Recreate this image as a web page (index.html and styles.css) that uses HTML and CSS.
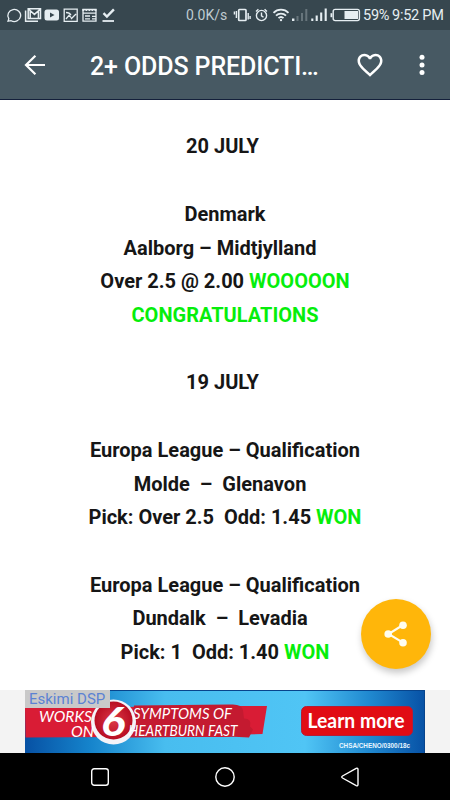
FILE: index.html
```html
<!doctype html>
<html lang="en">
<head>
  <meta charset="utf-8" />
  <meta name="viewport" content="width=device-width,initial-scale=1" />
  <title>2+ Odds Predictions</title>
  <link rel="stylesheet" href="styles.css">
</head>

<body>
  <!-- Status bar -->
  <div class="statusBar">
    <svg class="notices" width="118" height="30" viewBox="0 0 118 30" fill="none" stroke="currentColor" stroke-width="1.3">
      <path d="M8 21.2l.8-2.6a6.4 6 0 1 1 2.3 2.1z" />
      <path d="M28.2 8.7h12.3v9.8H28.2zM28.4 9l6 5.4L40.4 9M30.2 18V11M38.4 18V11M25.6 10.5v10.7H38" stroke-width="1.5" />
      <rect x="44.5" y="9.5" width="14.5" height="11" rx="2.5" fill="currentColor" stroke="none" />
      <path class="cutout" d="M50 12.4v5.2l4.5-2.6z" />
      <path d="M64.2 9.2h13v12.2h-13zM66 19l3-3.6 2.2 2.2M71 19l5-5M66 12.5c2 0 4 .8 5 2.8" />
      <path d="M83 9.4h13v11.8H83zM83 13.2h13M85 16h5M85 18.8h5M92 16.4h4M92 18.8h4" />
      <path d="M82.4 10h14.2" stroke-width="2" stroke-dasharray="2 1" />
      <path d="M103.5 13.2l3.4 3.3 7-7.2" stroke-width="2.4" />
      <path d="M102.5 21h11.5" stroke-width="1.8" />
    </svg>
    <span class="netSpeed">0.0K/s</span>
    <svg class="signals" width="130" height="30" viewBox="232 0 130 30" fill="none" stroke="currentColor" stroke-width="1.4">
      <rect x="238.7" y="9.5" width="7.3" height="11" rx=".8" stroke-width="1.7" />
      <path d="M236.4 11v7M234.4 11.5v3M248.2 13v6.5M250.1 16v3" />
      <circle cx="261.5" cy="15.5" r="5.1" />
      <path d="M261.5 12.4v3.4l2 1.5M256 11.4l2.4-2.2M267 11.4l-2.4-2.2" />
      <path d="M273.5 12.8a10.4 10.4 0 0 1 15 0M276 15.7a7 7 0 0 1 10 0M278.5 18.2a3.6 3.6 0 0 1 5 0" stroke-width="1.8" />
      <circle cx="281" cy="20.1" r="1.2" fill="currentColor" stroke="none" />
      <path d="M293.2 18.5v2.5" stroke-width="2.4" />
      <path class="faint" d="M297.5 16v5M302 13v8M306.3 9v12" stroke-width="2" />
      <path d="M312.3 18.5v2.5M316.7 15.5v5.5M321.2 12.5v8.5M325.7 8.5v12.5" stroke-width="2.1" />
      <rect x="333.2" y="9.4" width="26.2" height="11.2" rx="2" />
      <path d="M331.4 13.2v4" stroke-width="1.8" />
      <path d="M344.5 11h13.5v8h-13.5z" fill="currentColor" stroke="none" />
    </svg>
    <span class="battery">59%</span>
    <span class="clock">9:52 PM</span>
  </div>

  <!-- App bar -->
  <header class="appBar">
    <button class="iconBtn back" type="button" aria-label="Back">
      <svg width="22" height="22" viewBox="0 0 22 22" fill="none" stroke="currentColor" stroke-width="2.2">
        <path d="M21 11H2.5M11.4 1.7L2 11l9.4 9.3" />
      </svg>
    </button>
    <h1 class="title">2+ ODDS PREDICTI…</h1>
    <button class="iconBtn heart" type="button" aria-label="Favourite">
      <svg width="30" height="30" viewBox="0 0 24 24" fill="currentColor">
        <path d="M16.5 3c-1.74 0-3.41.81-4.5 2.09C10.91 3.81 9.24 3 7.5 3 4.42 3 2 5.42 2 8.5c0 3.78 3.4 6.86 8.55 11.54L12 21.35l1.45-1.32C18.6 15.36 22 12.28 22 8.5 22 5.42 19.58 3 16.5 3zm-4.4 15.55l-.1.1-.1-.1C7.14 14.24 4 11.39 4 8.5 4 6.5 5.5 5 7.5 5c1.54 0 3.04.99 3.57 2.36h1.87C13.46 5.99 14.96 5 16.5 5c2 0 3.5 1.5 3.5 3.5 0 2.89-3.14 5.74-7.9 10.05z" />
      </svg>
    </button>
    <button class="iconBtn more" type="button" aria-label="More">
      <svg width="6" height="22" viewBox="0 0 6 22" fill="currentColor">
        <circle cx="3" cy="3.3" r="2.5" />
        <circle cx="3" cy="10.9" r="2.5" />
        <circle cx="3" cy="18.4" r="2.5" />
      </svg>
    </button>
  </header>

  <!-- Tips -->
  <main class="tips">
    <p>20 JULY&nbsp;</p>
    <p>Denmark<br>
      Aalborg – Midtjylland&nbsp;&nbsp;<br>
      Over 2.5 @ 2.00 <span class="won">WOOOOON<br>CONGRATULATIONS</span></p>
    <p>19 JULY&nbsp;</p>
    <p>Europa League – Qualification<br>
      Molde&nbsp; –&nbsp; Glenavon&nbsp;&nbsp;<br>
      Pick: Over 2.5&nbsp; Odd: 1.45 <span class="won">WON</span></p>
    <p>Europa League – Qualification<br>
      Dundalk&nbsp; –&nbsp; Levadia&nbsp;&nbsp;<br>
      Pick: 1&nbsp; Odd: 1.40 <span class="won">WON</span></p>
  </main>

  <button class="shareBtn" type="button" aria-label="Share">
    <svg width="26" height="28" viewBox="0 0 26 28" fill="currentColor" stroke="currentColor">
      <path d="M20 5L5.5 14 20 22.7" fill="none" stroke-width="2.1" />
      <circle cx="20" cy="5.2" r="3.8" stroke="none" />
      <circle cx="5.2" cy="14" r="3.8" stroke="none" />
      <circle cx="20" cy="22.7" r="3.8" stroke="none" />
    </svg>
  </button>

  <!-- Banner ad -->
  <div class="adRow">
    <svg class="ad" width="400" height="63" viewBox="25 690 400 63">
      <defs>
        <linearGradient id="sky" x1="0" x2="1" y1="0" y2="0">
          <stop offset="0" stop-color="#0751a4" />
          <stop offset=".16" stop-color="#1583cb" />
          <stop offset=".35" stop-color="#48bdef" />
          <stop offset=".7" stop-color="#50c5f5" />
          <stop offset=".86" stop-color="#2089d0" />
          <stop offset="1" stop-color="#0751a5" />
        </linearGradient>
        <radialGradient id="ball">
          <stop offset="0" stop-color="#dc3948" />
          <stop offset="1" stop-color="#b80d22" />
        </radialGradient>
      </defs>
      <rect x="25" y="690" width="400" height="63" fill="url(#sky)" />
      <path d="M25 708l92-1 110-1 40 0-4.500 28-20 .5-14 2.500-111 0-92 .5z" fill="#d91c35" />
      <path d="M134 705.500l96-1q12-1 13 6l1 8q8 0 6 8l3 3-4 8-20-1-100 1z" fill="#c41a30" />
      <path d="M25 690.5h399.500V753" fill="none" stroke="#07448c" />
      <circle cx="113.500" cy="722" r="22.500" fill="#f4f3f8" />
      <circle cx="113.500" cy="720.500" r="19" fill="url(#ball)" />
      <g class="adCopy">
        <text x="39" y="721.500" textLength="53" lengthAdjust="spacingAndGlyphs">WORKS</text>
        <text x="71" y="737" textLength="23" lengthAdjust="spacingAndGlyphs">ON</text>
        <text x="133" y="719" textLength="99" lengthAdjust="spacingAndGlyphs">SYMPTOMS OF</text>
        <text x="128.500" y="736" textLength="109" lengthAdjust="spacingAndGlyphs">HEARTBURN FAST</text>
      </g>
      <text class="adSix" x="101" y="735.500" textLength="24" lengthAdjust="spacingAndGlyphs">6</text>
      <rect x="301.500" y="706.500" width="111" height="29" rx="5" fill="#e10c14" stroke="#b71b35" />
      <text class="adCta" x="307.500" y="728" textLength="97" lengthAdjust="spacingAndGlyphs">Learn more</text>
      <text class="adCode" x="339" y="747.500" textLength="71" lengthAdjust="spacingAndGlyphs">CHSA/CHENO/0300/18c</text>
    </svg>
    <span class="adTag">Eskimi DSP</span>
  </div>

  <!-- System navigation -->
  <nav class="navBar">
    <svg width="20" height="20" viewBox="0 0 20 20"><rect x="1.7" y="1.7" width="16.6" height="16.6" rx="2.5" /></svg>
    <svg width="20" height="20" viewBox="0 0 20 20"><circle cx="10" cy="10" r="9.2" /></svg>
    <svg width="20" height="20" viewBox="0 0 20 20"><path d="M16.2 1.3L2.5 9q-1.5 1 0 2l13.7 7.7q1.8.6 1.8-1.2V2.5q0-1.8-1.8-1.2z" /></svg>
  </nav>
</body>
</html>
```

FILE: styles.css
```css
:root{
  --font: Roboto, "Noto Sans", sans-serif;
  --bar: #475963;
  --bar-dark: #37474f;
  --won: #06ee0b;
  --amber: #ffb60a;
}

*{ box-sizing:border-box }
body{
  margin:0;
  height:800px;
  overflow:hidden;
  display:flex;
  flex-direction:column;
  font-family:var(--font);
  background:#fff;
}
svg{ display:block; flex:none; }

/* Status bar */
.statusBar{
  flex:none;
  height:30px;
  display:flex;
  align-items:center;
  background:var(--bar-dark);
  color:#e6eef2;
  font-size:14.5px;
  line-height:32px;
  letter-spacing:-.25px;
  white-space:nowrap;
}
.cutout{ fill:var(--bar-dark); stroke:none; }
.faint{ opacity:.28; }
.netSpeed{ width:41px; margin-left:68px; color:#bfcbd1; font-size:14px; letter-spacing:0; }
.signals{ margin-left:5px; }
.battery,
.clock{ padding-top:2px; }
.battery{ width:27px; margin-left:1px; }
.clock{ margin-left:2px; }

/* App bar */
.appBar{
  flex:none;
  height:70px;
  display:flex;
  align-items:center;
  background:var(--bar);
  border-bottom:1px solid #14203b;
  color:#fff;
}
.iconBtn{
  appearance:none;
  border:0;
  padding:0;
  background:transparent;
  color:inherit;
}
.back{ margin-left:24px; }
.title{
  width:245px;
  margin:4px 0 0 44px;
  font-size:25px;
  font-weight:500;
  line-height:30px;
  letter-spacing:-.12px;
  white-space:nowrap;
}
.heart{ margin:1px 0 0 20px; }
.more{ margin:1px 0 0 34px; }

/* Tips */
.tips{
  flex:1;
  min-height:0;
  padding-top:30.4px;
  color:#161616;
  font-size:20px;
  font-weight:700;
  line-height:33.72px;
  text-align:center;
}
.tips p{ margin:0 0 33.72px; }
.won{ color:var(--won); }

/* Floating share button */
.shareBtn{
  position:absolute;
  left:361px;
  top:599px;
  width:70px;
  height:70px;
  display:flex;
  align-items:center;
  justify-content:center;
  border:0;
  border-radius:50%;
  background:var(--amber);
  box-shadow:1px 4px 7px rgba(0,0,0,.22);
  color:#fffdf0;
}

/* Banner ad */
.adRow{
  position:relative;
  flex:none;
  height:63px;
  display:flex;
  justify-content:center;
  background:#f3f3f3;
}
.adTag{
  position:absolute;
  left:25px;
  top:0;
  width:85px;
  height:18px;
  padding-left:4px;
  background:#c9c9c9;
  color:#5b82d3;
  font-size:15px;
  line-height:18px;
  white-space:nowrap;
}
.adCopy{
  fill:#fff;
  font:italic 400 16px Lato, sans-serif;
}
.adSix{ fill:#fff; font:italic 900 40px Lato, sans-serif; }
.adCta{ fill:#fff; font:700 20px Lato, sans-serif; }
.adCode{ fill:#e8f6ff; font:700 7px "Liberation Sans", sans-serif; }

/* System navigation */
.navBar{
  flex:none;
  height:47px;
  display:flex;
  align-items:center;
  justify-content:center;
  gap:105px;
  background:#000;
}
.navBar svg{ fill:none; stroke:#fff; stroke-width:1.4; }
```
